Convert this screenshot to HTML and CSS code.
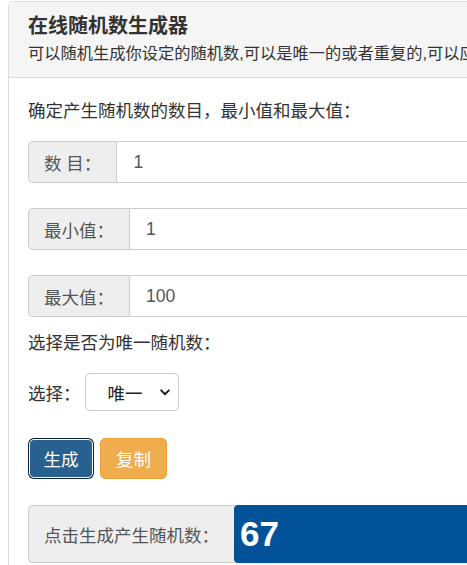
FILE: index.html
```html
<!DOCTYPE html>
<html lang="zh">
<head>
<meta charset="utf-8">
<title>在线随机数生成器</title>
<link rel="stylesheet" href="styles.css">
</head>
<body>
<div class="panel">
  <div class="panel-heading">
    <h3 class="panel-title">在线随机数生成器</h3>
    <p class="panel-desc">可以随机生成你设定的随机数,可以是唯一的或者重复的,可以应用于抽奖、抽签等场景</p>
  </div>
  <div class="panel-body">
    <p class="hint">确定产生随机数的数目，最小值和最大值：</p>
    <div class="input-group g1">
      <span class="addon">数 目：</span>
      <span class="field">1</span>
    </div>
    <div class="input-group g2">
      <span class="addon">最小值：</span>
      <span class="field">1</span>
    </div>
    <div class="input-group g3">
      <span class="addon">最大值：</span>
      <span class="field">100</span>
    </div>
    <p class="hint hint2">选择是否为唯一随机数：</p>
    <div class="choose">
      <span class="choose-label">选择：</span>
      <span class="select">唯一
        <svg class="chev" width="10" height="7" viewBox="0 0 10 7"><path d="M1.2 1.4 L5 5.2 L8.8 1.4" fill="none" stroke="#222" stroke-width="2" stroke-linecap="round" stroke-linejoin="round"/></svg>
      </span>
    </div>
    <div class="buttons">
      <span class="btn btn-primary">生成</span>
      <span class="btn btn-warning">复制</span>
    </div>
    <div class="input-group result">
      <span class="addon">点击生成产生随机数：</span>
      <span class="result-value">67</span>
    </div>
  </div>
</div>
</body>
</html>
```

FILE: styles.css
```css
html, body {
  margin: 0;
  padding: 0;
  overflow: hidden;
  background: #fff;
}
body {
  font-family: "Liberation Sans", "Noto Sans CJK SC", sans-serif;
  color: #333;
  width: 467px;
  height: 565px;
}
.panel {
  margin: 1px 0 0 8px;
  width: 760px;
  border: 1px solid #ddd;
  border-radius: 5px;
  background: #fff;
}
.panel-heading {
  background: #f5f5f5;
  border-bottom: 1px solid #ddd;
  border-radius: 5px 5px 0 0;
  padding: 13px 19px 12px;
}
.panel-title {
  margin: 0;
  font-size: 20px;
  line-height: 22px;
  font-weight: bold;
  color: #333;
}
.panel-desc {
  margin: 5px 0 0;
  font-size: 16.25px;
  line-height: 23px;
  color: #333;
  white-space: nowrap;
}
.panel-body {
  padding: 21px 19px 20px;
  font-size: 17.5px;
}
.hint {
  margin: 0;
  line-height: 25px;
  color: #333;
}
.input-group {
  display: flex;
  height: 42px;
  margin-top: 25px;
}
.g1 { margin-top: 17px; }
.addon {
  display: flex;
  align-items: center;
  padding: 0 15px;
  background: #eee;
  border: 1px solid #ccc;
  border-right: none;
  border-radius: 5px 0 0 5px;
  color: #555;
  white-space: nowrap;
}
.field {
  flex: 1;
  display: flex;
  align-items: center;
  padding: 0 16px;
  border: 1px solid #ccc;
  border-radius: 0 5px 5px 0;
  color: #555;
}
.hint2 {
  margin-top: 14px;
}
.choose {
  display: flex;
  align-items: center;
  margin-top: 17px;
}
.choose-label {
  color: #333;
  margin-right: 4px;
}
.select {
  display: flex;
  align-items: center;
  box-sizing: border-box;
  width: 94px;
  height: 38px;
  padding: 0 8px 0 22px;
  border: 1px solid #ccc;
  border-radius: 5px;
  color: #222;
}
.chev {
  margin-left: auto;
}
.buttons {
  display: flex;
  gap: 6px;
  margin-top: 27px;
}
.btn {
  display: flex;
  align-items: center;
  justify-content: center;
  box-sizing: border-box;
  width: 66px;
  height: 41px;
  border-radius: 5px;
  color: #fff;
}
.btn-primary {
  background: #286090;
  border: 1px solid #fff;
  box-shadow: 0 0 0 1px #0d1e2e;
  width: 64px;
  height: 39px;
  margin: 1px;
}
.btn-warning {
  background: #f0ad4e;
  border: 1px solid #eea236;
  width: 67px;
}
.result {
  height: 58px;
  margin-top: 26px;
}
.result .addon {
  width: 206px;
  box-sizing: border-box;
}
.result-value {
  flex: 1;
  display: flex;
  align-items: center;
  padding: 0 6px;
  background: #02529a;
  border-radius: 4px 0 0 4px;
  color: #fff;
  font-size: 35px;
  font-weight: bold;
}
```
